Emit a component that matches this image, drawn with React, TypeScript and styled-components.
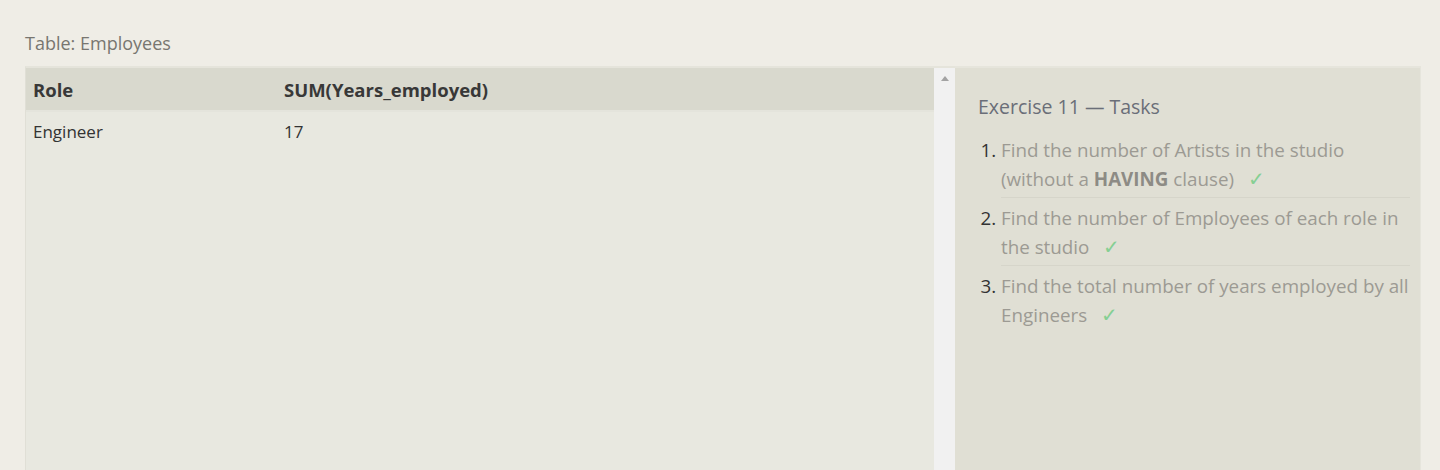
import React from "react";
import styled, { createGlobalStyle } from "styled-components";

const Global = createGlobalStyle`
  html, body { margin: 0; padding: 0; background: #efede6; }
  body { font-family: "Open Sans", "Noto Sans", sans-serif; }
`;

const Page = styled.div`
  width: 1440px;
  height: 470px;
  box-sizing: border-box;
  padding: 31px 19px 0 25px;
  overflow: hidden;
`;

const Caption = styled.div`
  font-size: 18px;
  color: #787670;
  height: 24px;
  line-height: 24px;
  margin-bottom: 11px;
`;

const Row = styled.div`
  display: flex;
  height: 420px;
`;

const TableWrap = styled.div`
  display: flex;
  width: 930px;
  border-top: 2px solid #e5e4db;
  border-left: 1px solid #e0dfd6;
  box-sizing: border-box;
  background: #e8e8e0;
`;

const TableScroll = styled.div`
  flex: 1;
`;

const Table = styled.table`
  width: 100%;
  border-collapse: collapse;
  color: #333;
`;

const Th = styled.th<{ $w?: number }>`
  text-align: left;
  background: #d9d9ce;
  font-weight: 700;
  font-size: 18.5px;
  height: 42px;
  padding: 0 7px;
  color: #383838;
  border-bottom: 2px solid #e4e4dc;
  width: ${(p) => (p.$w ? `${p.$w}px` : "auto")};
`;

const Td = styled.td`
  height: 38px;
  padding: 0 7px;
  font-size: 17px;
`;

const Scrollbar = styled.div`
  width: 21px;
  background: #f1f1f1;
  display: flex;
  justify-content: center;
  padding-top: 8px;
  box-sizing: border-box;
`;

const ArrowUp = styled.div`
  width: 0;
  height: 0;
  border-left: 4px solid transparent;
  border-right: 4px solid transparent;
  border-bottom: 5px solid #a3a3a3;
`;

const Tasks = styled.div`
  width: 466px;
  box-sizing: border-box;
  background: #e0dfd4;
  border-top: 2px solid #e6e5dc;
  border-right: 1px solid #e6e5dc;
  padding: 26px 10px 0 23px;
`;

const Title = styled.h3`
  margin: 0 0 10px;
  font-weight: 400;
  font-size: 19.5px;
  line-height: 26px;
  color: #6a6e78;
`;

const List = styled.ol`
  margin: 0;
  padding: 0 0 0 23px;
`;

const Item = styled.li<{ $last?: boolean }>`
  font-size: 18.8px;
  line-height: 28.5px;
  color: #9c9a93;
  padding: 6px 0 4px;
  border-bottom: ${(p) => (p.$last ? "none" : "1px solid #d6d5ca")};
  &::marker {
    color: #333;
  }
  b {
    color: #8d8b85;
  }
`;

const Check = styled.span`
  color: #86cf93;
  font-size: 20px;
  line-height: 1;
  margin-left: 14px;
`;

export default function App() {
  return (
    <Page>
      <Global />
      <Caption>Table: Employees</Caption>
      <Row>
        <TableWrap>
          <TableScroll>
            <Table>
              <thead>
                <tr>
                  <Th $w={237}>Role</Th>
                  <Th>SUM(Years_employed)</Th>
                </tr>
              </thead>
              <tbody>
                <tr>
                  <Td>Engineer</Td>
                  <Td>17</Td>
                </tr>
              </tbody>
            </Table>
          </TableScroll>
          <Scrollbar>
            <ArrowUp />
          </Scrollbar>
        </TableWrap>
        <Tasks>
          <Title>Exercise 11 — Tasks</Title>
          <List>
            <Item>
              Find the number of Artists in the studio (without a <b>HAVING</b> clause)
              <Check>✓</Check>
            </Item>
            <Item>
              Find the number of Employees of each role in the studio
              <Check>✓</Check>
            </Item>
            <Item $last>
              Find the total number of years employed by all Engineers
              <Check>✓</Check>
            </Item>
          </List>
        </Tasks>
      </Row>
    </Page>
  );
}
